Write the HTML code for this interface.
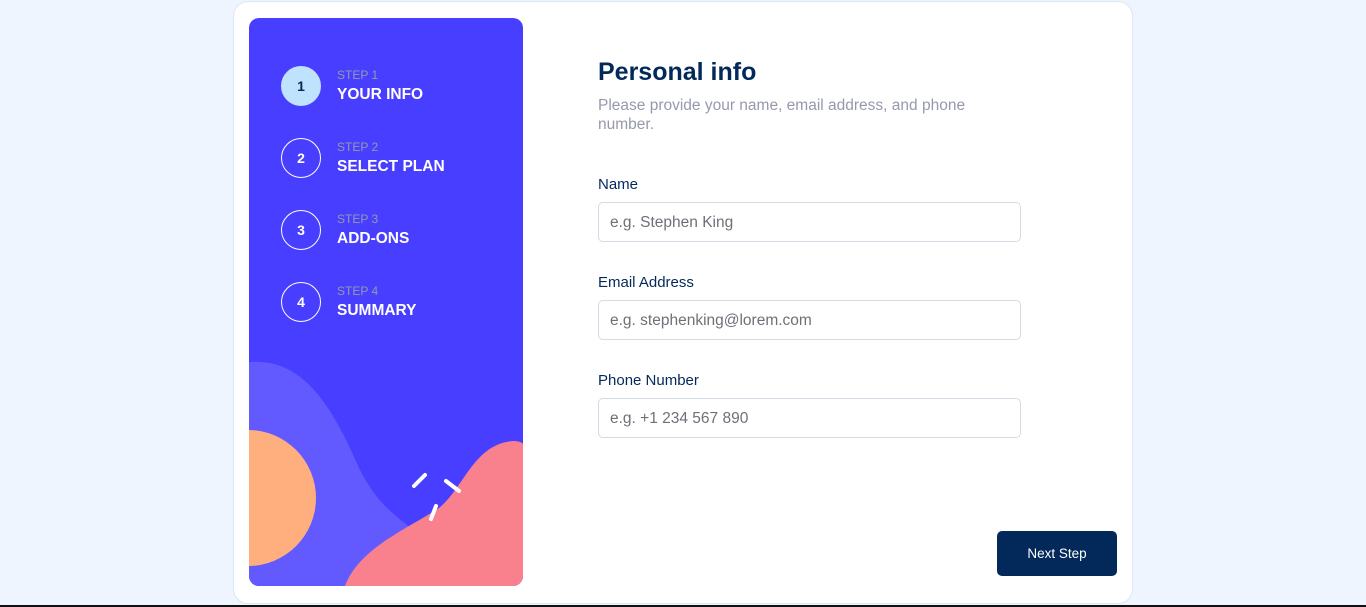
<!DOCTYPE html>
<html><head><meta charset="utf-8"><style>
*{box-sizing:border-box;margin:0;padding:0}
body{width:1366px;height:607px;background:#eff5ff;font-family:"Liberation Sans",sans-serif;position:relative;overflow:hidden}
.card{position:absolute;left:233px;top:1px;width:900px;height:603px;background:#fff;border-radius:15px;border:1px solid #dde6f3}
.side{position:absolute;left:249px;top:18px;width:274px;height:568px;background:#483eff;border-radius:10px;overflow:hidden}
.side svg{position:absolute;left:0;top:0}
.step{position:absolute;left:32px;height:40px}
.num{position:absolute;left:0;top:0;width:40px;height:40px;border:1px solid #fff;border-radius:50%;color:#fff;font-weight:bold;font-size:14px;text-align:center;line-height:38px}
.num.on{background:#bfe2fd;border-color:#bfe2fd;color:#02295a}
.sl{position:absolute;left:56px;top:2px;font-size:12px;color:#9699ab;white-space:nowrap}
.st{position:absolute;left:56px;top:20px;font-size:15.5px;font-weight:bold;color:#fff;white-space:nowrap}
h1{position:absolute;left:598px;top:58px;font-size:25px;color:#02295a;font-weight:bold}
.sub{position:absolute;left:598px;top:96px;width:420px;font-size:15.5px;line-height:19px;color:#9699ab}
.lab{position:absolute;left:598px;font-size:15px;color:#02295a}
.in{position:absolute;left:598px;width:423px;height:40px;border:1px solid #d6d9e6;border-radius:5px;font-size:15.5px;color:#6f6f78;padding-left:11px;line-height:40px}
.btn{position:absolute;left:997px;top:531px;width:120px;height:45px;background:#02295a;color:#fff;border-radius:5px;font-size:13.5px;text-align:center;line-height:45px}
.bot{position:absolute;left:0;top:605px;width:1366px;height:2px;background:#111}
</style></head><body>
<div class="card"></div>
<div class="side">
<svg width="274" height="568" viewBox="0 0 274 568">
<path d="M0 344 C50 340 80 380 110 450 C130 490 150 500 175 520 L175 568 L0 568Z" fill="#6259ff"/>
<circle cx="-1" cy="480" r="68" fill="#ffaf7e"/>
<path d="M96 568 C110 530 160 510 190 490 C215 470 225 425 265 423 C270 423 274 425 274 426 L274 568Z" fill="#f9818e"/>
<g stroke="#fff" stroke-width="4" stroke-linecap="round">
<line x1="165" y1="468" x2="176" y2="457"/>
<line x1="197" y1="463" x2="210" y2="473"/>
<line x1="182" y1="501" x2="187" y2="488"/>
</g>
</svg>
<div class="step" style="top:48px"><div class="num on">1</div><div class="sl">STEP 1</div><div class="st">YOUR INFO</div></div>
<div class="step" style="top:120px"><div class="num">2</div><div class="sl">STEP 2</div><div class="st">SELECT PLAN</div></div>
<div class="step" style="top:192px"><div class="num">3</div><div class="sl">STEP 3</div><div class="st">ADD-ONS</div></div>
<div class="step" style="top:264px"><div class="num">4</div><div class="sl">STEP 4</div><div class="st">SUMMARY</div></div>
</div>
<h1>Personal info</h1>
<div class="sub">Please provide your name, email address, and phone number.</div>
<div class="lab" style="top:176px">Name</div>
<div class="in" style="top:202px">e.g. Stephen King</div>
<div class="lab" style="top:274px">Email Address</div>
<div class="in" style="top:300px">e.g. stephenking@lorem.com</div>
<div class="lab" style="top:372px">Phone Number</div>
<div class="in" style="top:398px">e.g. +1 234 567 890</div>
<div class="btn">Next Step</div>
<div class="bot"></div>
</body></html>
